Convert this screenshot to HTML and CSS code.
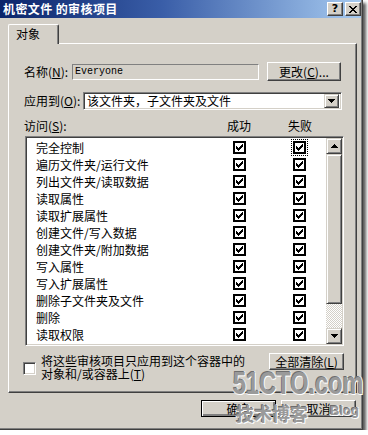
FILE: index.html
```html
<!DOCTYPE html>
<html lang="zh">
<head>
<meta charset="utf-8">
<link rel="stylesheet" href="styles.css">
</head>
<body>
<div class="window">
  <div class="titlebar">
    <span class="title">机密文件 的审核项目</span>
    <div class="tbtns">
      <span class="tbtn help">?</span>
      <span class="tbtn"><svg width="8" height="7" viewBox="0 0 8 7" shape-rendering="crispEdges"><path d="M0 0h2v1h-2zM6 0h2v1h-2zM1 1h2v1h-2zM5 1h2v1h-2zM2 2h4v1h-4zM3 3h2v1h-2zM2 4h4v1h-4zM1 5h2v1h-2zM5 5h2v1h-2zM0 6h2v1h-2zM6 6h2v1h-2z" fill="#000"/></svg></span>
    </div>
  </div>
  <div class="client">
    <div class="tabs"><div class="tab">对象</div></div>
    <div class="panel">
      <div class="row name-row">
        <span class="lbl lbl-name">名称(<u>N</u>):</span>
        <div class="field">Everyone</div>
        <button class="btn btn-change">更改(<u>C</u>)...</button>
      </div>
      <div class="row apply-row">
        <span class="lbl lbl-apply">应用到(<u>O</u>):</span>
        <div class="combo">
          <span class="combo-text">该文件夹，子文件夹及文件</span>
          <span class="sbtn combo-btn"><svg width="7" height="4" viewBox="0 0 7 4" shape-rendering="crispEdges"><path d="M0 0h7v1h-7zM1 1h5v1h-5zM2 2h3v1h-3zM3 3h1v1h-1z" fill="#000"/></svg></span>
        </div>
      </div>
      <div class="row head-row">
        <span class="lbl lbl-access">访问(<u>S</u>):</span>
        <span class="colhead">成功</span>
        <span class="colhead fail">失败</span>
      </div>
      <div class="listbox">
        <div class="items">
          <div class="item"><span>完全控制</span><i class="cb"></i><i class="cb focus"></i></div>
          <div class="item"><span>遍历文件夹/运行文件</span><i class="cb"></i><i class="cb"></i></div>
          <div class="item"><span>列出文件夹/读取数据</span><i class="cb"></i><i class="cb"></i></div>
          <div class="item"><span>读取属性</span><i class="cb"></i><i class="cb"></i></div>
          <div class="item"><span>读取扩展属性</span><i class="cb"></i><i class="cb"></i></div>
          <div class="item"><span>创建文件/写入数据</span><i class="cb"></i><i class="cb"></i></div>
          <div class="item"><span>创建文件夹/附加数据</span><i class="cb"></i><i class="cb"></i></div>
          <div class="item"><span>写入属性</span><i class="cb"></i><i class="cb"></i></div>
          <div class="item"><span>写入扩展属性</span><i class="cb"></i><i class="cb"></i></div>
          <div class="item"><span>删除子文件夹及文件</span><i class="cb"></i><i class="cb"></i></div>
          <div class="item"><span>删除</span><i class="cb"></i><i class="cb"></i></div>
          <div class="item"><span>读取权限</span><i class="cb"></i><i class="cb"></i></div>
        </div>
        <div class="vscroll">
          <span class="sbtn"><svg width="7" height="4" viewBox="0 0 7 4" shape-rendering="crispEdges"><path d="M3 0h1v1h-1zM2 1h3v1h-3zM1 2h5v1h-5zM0 3h7v1h-7z" fill="#000"/></svg></span>
          <span class="thumb"></span>
          <span class="track"></span>
          <span class="sbtn"><svg width="7" height="4" viewBox="0 0 7 4" shape-rendering="crispEdges"><path d="M0 0h7v1h-7zM1 1h5v1h-5zM2 2h3v1h-3zM3 3h1v1h-1z" fill="#000"/></svg></span>
        </div>
      </div>
      <div class="row bottom-row">
        <span class="cb empty"></span>
        <span class="cbtext">将这些审核项目只应用到这个容器中的<br>对象和/或容器上(<u>T</u>)</span>
        <button class="btn btn-clear">全部清除(<u>L</u>)</button>
      </div>
    </div>
    <div class="footer">
      <button class="btn default">确定</button>
      <button class="btn">取消</button>
    </div>
  </div>
  <div class="watermark">
    <span class="wm-big">51CTO.com</span>
    <span class="wm-cn">技术博客</span>
    <span class="wm-blog">Blog</span>
  </div>
</div>
</body>
</html>
```
FILE: styles.css
```css
* { box-sizing: border-box; }
html, body { margin: 0; padding: 0; }
body {
  background: #ffffff;
  font-family: "Noto Sans CJK SC", "Liberation Sans", sans-serif;
  font-size: 12px;
  color: #000;
}
u { text-decoration: underline; }

.window {
  position: relative;
  width: 363px;
  height: 430px;
  background: #d4d0c8;
  border-right: 1px solid #404040;
  border-bottom: 1px solid #404040;
  box-shadow: inset -1px -1px 0 #808080, 3px 3px 3px rgba(0,0,0,0.65);
  display: flex;
  flex-direction: column;
}

.titlebar {
  height: 18px;
  margin-right: 1px;
  background: linear-gradient(to right, #0a246a 0%, #3a5ea8 45%, #a6caf0 100%);
  display: flex;
  align-items: center;
  justify-content: space-between;
}
.title {
  color: #fff;
  font-weight: bold;
  font-size: 12px;
  line-height: 18px;
  padding-left: 3px;
  letter-spacing: 0.4px;
}
.tbtns { display: flex; gap: 2px; padding-right: 0; height: 14px; }
.tbtn {
  width: 16px; height: 14px;
  background: #d4d0c8;
  border-top: 1px solid #fff; border-left: 1px solid #fff;
  border-right: 1px solid #404040; border-bottom: 1px solid #404040;
  box-shadow: inset -1px -1px 0 #808080;
  display: flex; align-items: center; justify-content: center;
  font-family: "DejaVu Sans", sans-serif;
  font-weight: bold;
  font-size: 11px;
  line-height: 12px;
}

.client {
  padding: 6px 0 0 8px;
  display: flex;
  flex-direction: column;
}
.tabs { display: flex; height: 20px; margin-bottom: -1px; position: relative; z-index: 1; }
.tab {
  width: 51px; height: 20px;
  background: #d4d0c8;
  border-top: 1px solid #fff;
  border-left: 1px solid #fff;
  border-right: 1px solid #404040;
  border-top-left-radius: 2px;
  border-top-right-radius: 2px;
  box-shadow: inset -1px 0 0 #808080;
  padding-left: 7px;
  line-height: 18px;
}
.panel {
  width: 349px;
  height: 350px;
  border-top: 1px solid #fff;
  border-left: 1px solid #fff;
  border-right: 1px solid #404040;
  border-bottom: 1px solid #404040;
  box-shadow: inset -1px -1px 0 #808080;
  padding: 0 0 0 15px;
  display: flex;
  flex-direction: column;
}
.row { display: flex; align-items: center; }
.lbl { line-height: 14px; white-space: nowrap; }

.name-row { margin-top: 18px; height: 19px; }
.lbl-name { width: 48px; }
.field {
  width: 187px; height: 16px;
  border-top: 1px solid #808080; border-left: 1px solid #808080;
  border-right: 1px solid #fff; border-bottom: 1px solid #fff;
  font-family: "Liberation Mono", monospace;
  font-size: 10px;
  line-height: 14px;
  padding-left: 2px;
}
.btn {
  font-family: "Noto Sans CJK SC", "Liberation Sans", sans-serif;
  font-size: 12px;
  color: #000;
  background: #d4d0c8;
  border-top: 1px solid #fff; border-left: 1px solid #fff;
  border-right: 1px solid #404040; border-bottom: 1px solid #404040;
  box-shadow: inset -1px -1px 0 #808080;
  padding: 0;
  margin: 0;
  line-height: 14px;
  width: 75px;
  height: 17px;
}
.btn-change { width: 74px; height: 19px; margin-left: 8px; }
.btn.default { border: 1px solid #000; box-shadow: inset 1px 1px 0 #fff, inset -2px -2px 0 #808080; }

.apply-row { margin-top: 11px; height: 18px; }
.lbl-apply { width: 59px; }
.combo {
  width: 259px; height: 18px;
  background: #fff;
  border-top: 1px solid #808080; border-left: 1px solid #808080;
  border-right: 1px solid #fff; border-bottom: 1px solid #fff;
  box-shadow: inset 1px 1px 0 #404040, inset -1px -1px 0 #d4d0c8;
  display: flex; align-items: center; justify-content: space-between;
  padding: 0 2px 0 2px;
}
.combo-text { line-height: 14px; padding-left: 1px; }
.sbtn {
  width: 16px; height: 15px;
  flex: none;
  background: #d4d0c8;
  border-top: 1px solid #d4d0c8; border-left: 1px solid #d4d0c8;
  border-right: 1px solid #404040; border-bottom: 1px solid #404040;
  box-shadow: inset 1px 1px 0 #fff, inset -1px -1px 0 #808080;
  display: flex; align-items: center; justify-content: center;
}
.combo-btn { width: 15px; height: 14px; }

.head-row { margin-top: 9px; height: 14px; }
.lbl-access { width: 203px; }
.colhead { width: 24px; line-height: 14px; }
.colhead.fail { margin-left: 37px; }

.listbox {
  margin-top: 3px;
  margin-left: 1px;
  width: 319px;
  height: 210px;
  background: #fff;
  border-top: 1px solid #808080; border-left: 1px solid #808080;
  border-right: 1px solid #fff; border-bottom: 1px solid #fff;
  box-shadow: inset 1px 1px 0 #404040, inset -1px -1px 0 #d4d0c8;
  padding: 1px 1px 1px 1px;
  display: flex;
}
.items { flex: 1; padding-top: 1px; }
.item {
  display: grid;
  grid-template-columns: 197px 13px 47px 13px;
  align-items: center;
  height: 17px;
  padding-left: 9px;
  line-height: 17px;
  white-space: nowrap;
}
.item .cb:nth-of-type(2) { grid-column: 4; }

.cb {
  display: block;
  width: 13px; height: 13px;
  border: 2px solid #000;
  background: #fff url("data:image/svg+xml;utf8,<svg xmlns='http://www.w3.org/2000/svg' width='9' height='9' viewBox='0 0 9 9' shape-rendering='crispEdges'><path d='M1 3h1v3h-1zM2 4h1v3h-1zM3 5h1v3h-1zM4 4h1v3h-1zM5 3h1v3h-1zM6 2h1v3h-1zM7 1h1v3h-1z' fill='black'/></svg>") no-repeat 0 0;
}
.cb.focus { outline: 1px dotted #000; outline-offset: 1px; }
.cb.empty {
  background: #fff;
  border-top: 1px solid #808080; border-left: 1px solid #808080;
  border-right: 1px solid #fff; border-bottom: 1px solid #fff;
  box-shadow: inset 1px 1px 0 #404040, inset -1px -1px 0 #d4d0c8;
  flex: none;
}

.vscroll {
  width: 16px;
  display: flex;
  flex-direction: column;
}
.vscroll .sbtn { height: 16px; }
.thumb {
  height: 150px;
  background: #d4d0c8;
  border-top: 1px solid #d4d0c8; border-left: 1px solid #d4d0c8;
  border-right: 1px solid #404040; border-bottom: 1px solid #404040;
  box-shadow: inset 1px 1px 0 #fff, inset -1px -1px 0 #808080;
}
.track {
  flex: 1;
  background-color: #d4d0c8;
  background-image: conic-gradient(#ffffff 25%, #d4d0c8 0 50%, #ffffff 0 75%, #d4d0c8 0);
  background-size: 2px 2px;
}

.bottom-row { margin-top: 7px; align-items: flex-start; height: 27px; }
.bottom-row .cb.empty { margin-top: 9px; margin-left: -1px; }
.cbtext { width: 222px; line-height: 13px; padding-top: 1px; margin-left: 5px; white-space: nowrap; }
.btn-clear { width: 75px; height: 17px; margin-left: 6px; }

.footer {
  width: 349px;
  display: flex;
  justify-content: flex-end;
  gap: 5px;
  margin-top: 7px;
  padding-right: 1px;
}

.watermark {
  position: absolute;
  left: 0; top: 0;
  width: 100%; height: 100%;
  pointer-events: none;
}
.watermark span {
  position: absolute;
  color: #9a9a9a;
  font-weight: bold;
  white-space: nowrap;
  text-shadow: 1px 1px 0 #ffffff, -1px -1px 0 #6e6e6e, 1px -1px 0 #e8e8e8, -1px 1px 0 #e8e8e8;
}
.wm-big {
  left: 233px; top: 366px;
  font-family: "Liberation Sans", sans-serif;
  font-size: 31px;
  line-height: 36px;
  transform: scaleX(0.76);
  transform-origin: left top;
}
.wm-cn {
  left: 236px; top: 402px;
  font-family: "Noto Sans CJK SC", sans-serif;
  font-size: 18px;
  line-height: 22px;
}
.wm-blog {
  left: 330px; top: 403px;
  font-family: "Liberation Sans", sans-serif;
  font-size: 13px;
  line-height: 16px;
}
```
